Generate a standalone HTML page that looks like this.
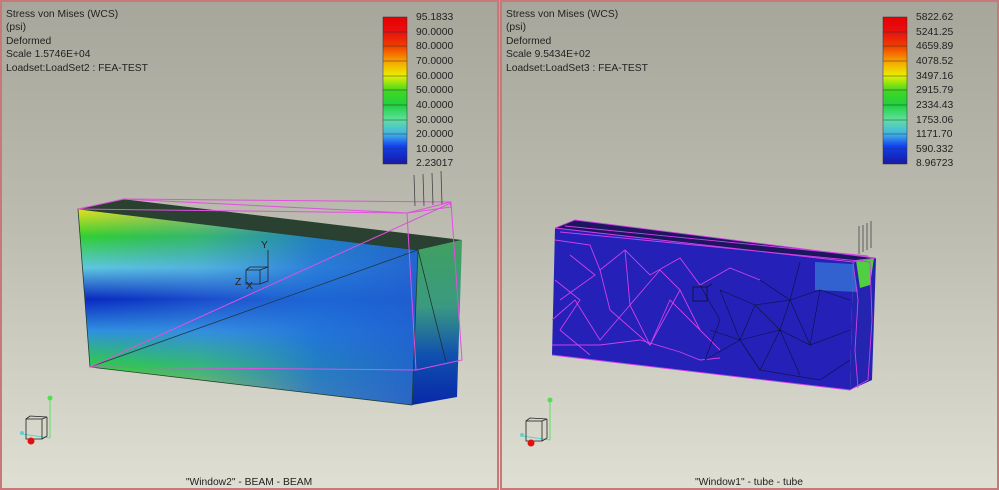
<!DOCTYPE html>
<html><head><meta charset="utf-8"><style>
html,body{margin:0;padding:0;background:#d8d8cc;}
svg{display:block}
text{font-family:"Liberation Sans",sans-serif;font-size:10.3px;fill:#222;}
</style></head><body>
<svg width="999" height="490" viewBox="0 0 999 490" xmlns="http://www.w3.org/2000/svg">
<defs>
<linearGradient id="bg" x1="0" y1="0" x2="0" y2="1">
<stop offset="0" stop-color="#a7a69b"/><stop offset="0.45" stop-color="#bcbbb0"/><stop offset="1" stop-color="#dfdfd3"/>
</linearGradient>
<linearGradient id="fv" x1="0" y1="0" x2="0" y2="1">
<stop offset="0" stop-color="#e8e020"/><stop offset="0.14" stop-color="#30d030"/><stop offset="0.3" stop-color="#60c8e0"/>
<stop offset="0.46" stop-color="#0828c0"/><stop offset="0.62" stop-color="#3090e0"/><stop offset="0.8" stop-color="#30d040"/><stop offset="1" stop-color="#f0c020"/>
</linearGradient>
<linearGradient id="fh" x1="0" y1="0" x2="1" y2="0">
<stop offset="0" stop-color="#2f7ad8" stop-opacity="0"/><stop offset="0.35" stop-color="#3a8ae0" stop-opacity="0.35"/><stop offset="0.7" stop-color="#2070d8" stop-opacity="0.85"/><stop offset="1" stop-color="#2060d0" stop-opacity="0.95"/>
</linearGradient>
<linearGradient id="rf" x1="0" y1="0" x2="0" y2="1">
<stop offset="0" stop-color="#40a060"/><stop offset="0.4" stop-color="#3a9a80"/><stop offset="0.7" stop-color="#1050b0"/><stop offset="1" stop-color="#0828a8"/>
</linearGradient>
<linearGradient id="lg" x1="0" y1="0" x2="0" y2="1">
<stop offset="0" stop-color="#e80000"/><stop offset="0.1" stop-color="#e81010"/><stop offset="0.2" stop-color="#f04000"/><stop offset="0.3" stop-color="#f8a000"/>
<stop offset="0.4" stop-color="#e8f000"/><stop offset="0.5" stop-color="#40d820"/><stop offset="0.6" stop-color="#20d040"/><stop offset="0.7" stop-color="#60e0a0"/>
<stop offset="0.8" stop-color="#40b0e8"/><stop offset="0.88" stop-color="#1040f0"/><stop offset="1" stop-color="#1818a0"/>
</linearGradient>
<g id="legend">
<rect x="383" y="17" width="24" height="147" fill="url(#lg)" stroke="#333" stroke-width="0.5"/>
<g stroke="#333" stroke-width="0.6">
<line x1="383" y1="32" x2="407" y2="32"/><line x1="383" y1="46" x2="407" y2="46"/><line x1="383" y1="61" x2="407" y2="61"/>
<line x1="383" y1="76" x2="407" y2="76"/><line x1="383" y1="90" x2="407" y2="90"/><line x1="383" y1="105" x2="407" y2="105"/>
<line x1="383" y1="120" x2="407" y2="120"/><line x1="383" y1="134" x2="407" y2="134"/><line x1="383" y1="149" x2="407" y2="149"/>
</g>
</g>
<g id="triad">
<line x1="50" y1="398" x2="50" y2="438" stroke="#60e060"/>
<circle cx="50" cy="398" r="2.5" fill="#50e050"/>
<line x1="22" y1="434" x2="50" y2="438" stroke="#60d0d0"/>
<circle cx="22" cy="433" r="2" fill="#60d0d0"/>
<rect x="26" y="419" width="16" height="20" fill="none" stroke="#222" stroke-width="0.8"/>
<path d="M26 419 L30 416 L47 417 L42 419 M47 417 L47 436 L42 439" fill="none" stroke="#222" stroke-width="0.8"/>
<circle cx="31" cy="441" r="3.5" fill="#e01010"/>
</g>
</defs>
<rect width="999" height="490" fill="url(#bg)"/>
<rect x="1" y="1" width="497" height="488" fill="none" stroke="#c87878" stroke-width="2"/>
<rect x="501" y="1" width="497" height="488" fill="none" stroke="#c87878" stroke-width="2"/>

<text x="6" y="17">Stress von Mises (WCS)</text>
<text x="6" y="30">(psi)</text>
<text x="6" y="44">Deformed</text>
<text x="6" y="57">Scale  1.5746E+04</text>
<text x="6" y="71">Loadset:LoadSet2 :  FEA-TEST</text>
<use href="#legend"/>
<g>
<text x="416" y="20">95.1833</text><text x="416" y="35">90.0000</text><text x="416" y="49">80.0000</text><text x="416" y="64">70.0000</text>
<text x="416" y="79">60.0000</text><text x="416" y="93">50.0000</text><text x="416" y="108">40.0000</text><text x="416" y="123">30.0000</text>
<text x="416" y="137">20.0000</text><text x="416" y="152">10.0000</text><text x="416" y="166">2.23017</text>
</g>

<polygon points="78,209 122,199 462,240 418,250" fill="#2a4030"/>
<polygon points="78,209 418,250 412,405 90,367" fill="url(#fv)"/>
<polygon points="78,209 418,250 412,405 90,367" fill="url(#fh)"/>
<polygon points="418,250 462,240 457,397 412,405" fill="url(#rf)"/>
<polygon points="78,209 418,250 412,405 90,367" fill="none" stroke="#204030" stroke-width="0.8"/>
<line x1="90" y1="367" x2="418" y2="250" stroke="#203840" stroke-width="0.8"/>
<line x1="418" y1="250" x2="446" y2="362" stroke="#203030" stroke-width="0.8"/>
<g fill="none" stroke="#e050e0" stroke-width="1">
<polyline points="78,209 124,199 450,202 451,207 407,213 78,209"/>
<polyline points="407,213 451,202 462,360 416,370 90,367"/>
<line x1="407" y1="213" x2="416" y2="370"/>
<line x1="90" y1="367" x2="451" y2="203"/>
<line x1="122" y1="199" x2="407" y2="213"/>
</g>
<g stroke="#444" stroke-width="0.8">
<line x1="414" y1="175" x2="415" y2="206"/><line x1="423" y1="174" x2="424" y2="206"/><line x1="432" y1="173" x2="433" y2="205"/><line x1="441" y1="171" x2="442" y2="204"/>
</g>
<g fill="none" stroke="#222" stroke-width="0.8">
<rect x="246" y="270" width="14" height="14"/><path d="M246 270 L250 267 L268 267 L268 281 L260 284 M260 270 L268 267"/><line x1="268" y1="267" x2="268" y2="250"/>
</g>
<text x="261" y="248" font-size="9">Y</text><text x="235" y="285" font-size="9">Z</text><text x="246" y="289" font-size="8">X</text>
<use href="#triad"/>
<text x="249" y="485" text-anchor="middle">"Window2" - BEAM - BEAM</text>

<text x="506" y="17">Stress von Mises (WCS)</text>
<text x="506" y="30">(psi)</text>
<text x="506" y="44">Deformed</text>
<text x="506" y="57">Scale  9.5434E+02</text>
<text x="506" y="71">Loadset:LoadSet3 :  FEA-TEST</text>
<use href="#legend" x="500"/>
<g>
<text x="916" y="20">5822.62</text><text x="916" y="35">5241.25</text><text x="916" y="49">4659.89</text><text x="916" y="64">4078.52</text>
<text x="916" y="79">3497.16</text><text x="916" y="93">2915.79</text><text x="916" y="108">2334.43</text><text x="916" y="123">1753.06</text>
<text x="916" y="137">1171.70</text><text x="916" y="152">590.332</text><text x="916" y="166">8.96723</text>
</g>

<polygon points="555,228 575,220 875,258 853,262" fill="#1c1660"/>
<polygon points="555,228 853,262 850,390 552,355" fill="#2420b8"/>
<polygon points="853,262 876,258 872,380 850,390" fill="#2424b0"/>
<polygon points="815,262 853,264 858,292 815,290" fill="#3a90e0" opacity="0.6"/>
<polygon points="856,260 874,258 870,285 860,288" fill="#50d040"/>
<g fill="none" stroke="#d040e8" stroke-width="0.9">
<polyline points="555,228 575,220 875,258 853,262 555,228"/>
<polyline points="560,232 870,262"/>
<polyline points="565,226 868,256"/>
<polyline points="555,240 590,245 600,270 625,250 650,275 680,258 700,285 730,268 760,280"/>
<polyline points="552,320 575,300 600,340 630,305 650,345 670,300 700,330 720,350"/>
<polyline points="552,345 600,345 640,340 680,352 700,360 720,358"/>
<polyline points="555,280 580,300 560,330 590,355"/>
<polyline points="600,270 610,310 650,345 680,290 700,330"/>
<polyline points="625,250 630,305 660,270 680,290"/>
<polyline points="570,255 595,275 560,300"/>
<polyline points="853,262 858,300 855,350 858,388"/>
<polyline points="870,262 872,320 868,380 850,390"/>
<polyline points="552,355 850,390"/>
</g>
<g fill="none" stroke="#101040" stroke-width="0.6">
<polyline points="720,290 755,305 790,300 820,290 850,300"/>
<polyline points="710,330 740,340 780,330 810,345 850,330"/>
<polyline points="720,290 740,340 755,305 780,330 790,300 810,345 820,290"/>
<polyline points="700,285 720,320 705,360 740,340 760,370 780,330 800,375"/>
<polyline points="760,280 790,300 800,262"/>
<polyline points="740,340 760,370 820,380 850,360"/>
</g>
<g stroke="#444" stroke-width="0.8">
<line x1="859" y1="226" x2="859" y2="254"/><line x1="863" y1="225" x2="863" y2="252"/><line x1="867" y1="223" x2="867" y2="250"/><line x1="871" y1="221" x2="871" y2="248"/>
</g>
<g fill="none" stroke="#111" stroke-width="0.7">
<rect x="693" y="287" width="14" height="14"/><line x1="707" y1="287" x2="712" y2="284"/>
</g>
<use href="#triad" x="500" y="2"/>
<text x="749" y="485" text-anchor="middle">"Window1" - tube - tube</text>
</svg>
</body></html>
